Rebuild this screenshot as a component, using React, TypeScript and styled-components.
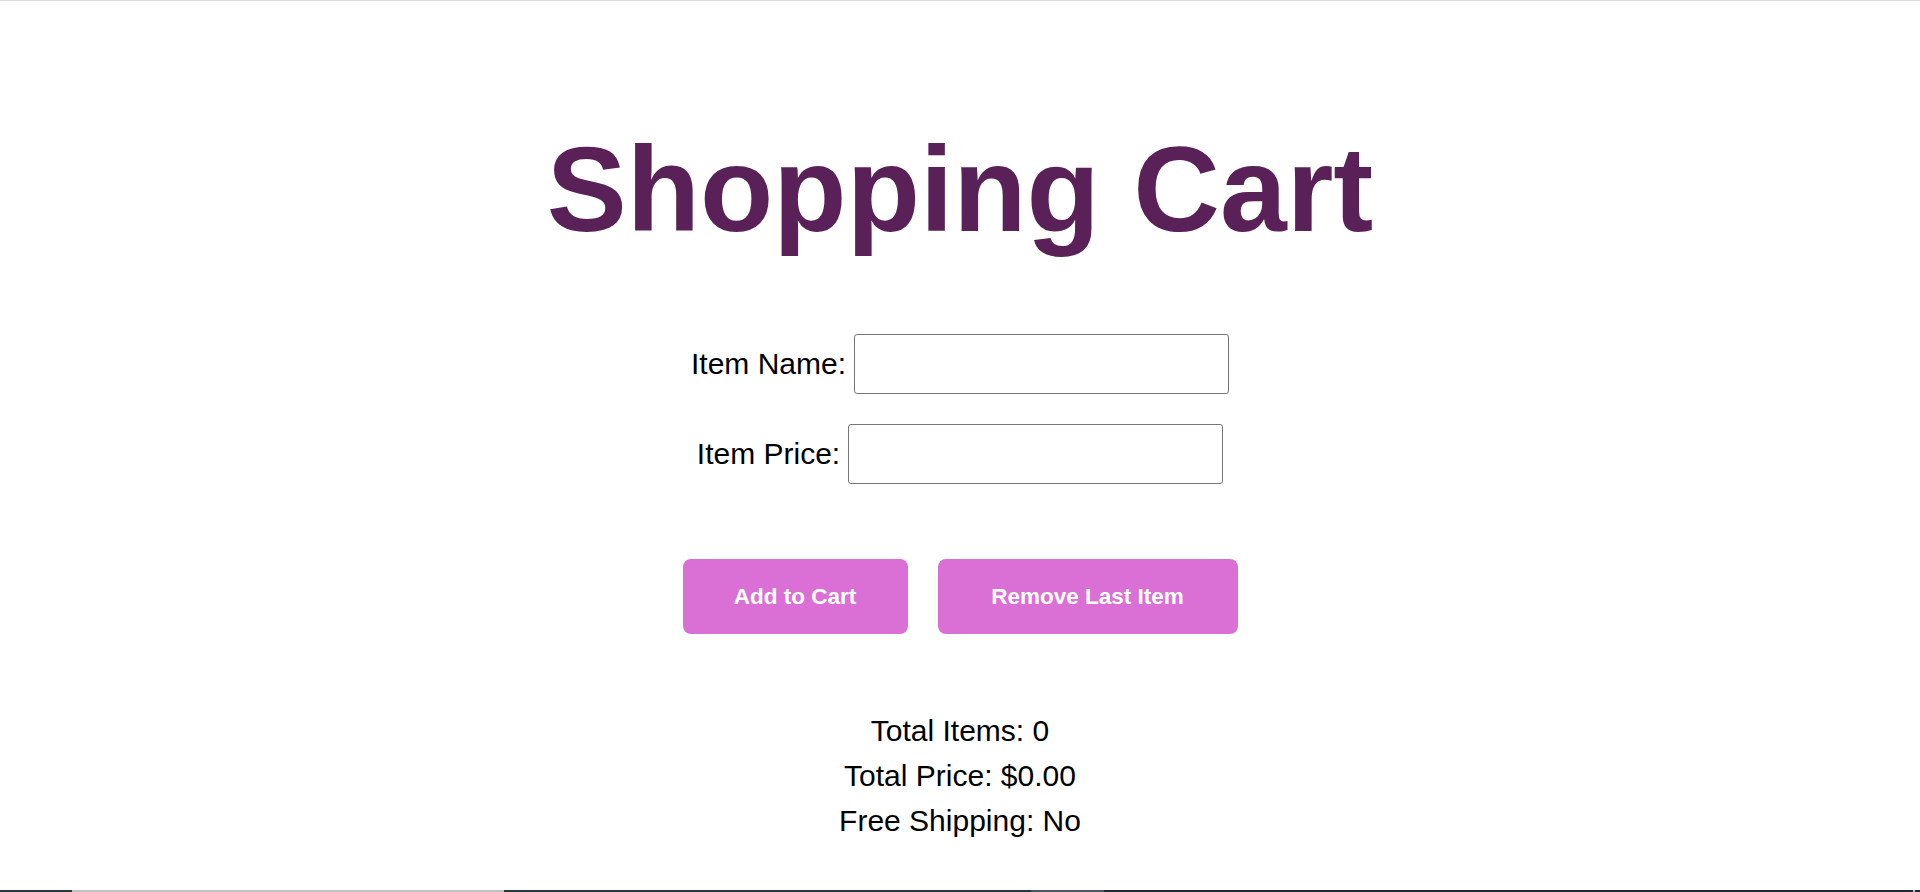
import React from "react";
import styled, { createGlobalStyle } from "styled-components";

const GlobalStyle = createGlobalStyle`
  html, body {
    margin: 0;
    padding: 0;
    background: #ffffff;
  }
  body {
    font-family: "Liberation Sans", Arial, sans-serif;
    color: #000000;
  }
  * { box-sizing: border-box; }
`;

const Page = styled.div`
  min-height: 100vh;
  display: flex;
  flex-direction: column;
  border-top: 1px solid #dcdcdc;
`;

const Main = styled.main`
  display: flex;
  flex-direction: column;
  align-items: center;
`;

const Title = styled.h1`
  margin: 119px 0 0;
  font-size: 120px;
  line-height: 138px;
  font-weight: 700;
  color: #5a2058;
`;

const Form = styled.div`
  margin-top: 76px;
  display: flex;
  flex-direction: column;
  align-items: center;
  gap: 30px;
`;

const FieldRow = styled.div`
  display: flex;
  align-items: center;
  justify-content: center;
  gap: 8px;
`;

const Label = styled.label`
  font-size: 30px;
  line-height: 34px;
  color: #000;
  white-space: nowrap;
`;

const TextInput = styled.input`
  width: 375px;
  height: 60px;
  border: 1px solid #767676;
  border-radius: 3px;
  background: #fff;
  padding: 0 10px;
  font-family: "Liberation Sans", Arial, sans-serif;
  font-size: 22px;
  outline: none;
`;

const ButtonRow = styled.div`
  margin-top: 75px;
  display: flex;
  gap: 30px;
`;

const ActionButton = styled.button<{ $w: number }>`
  width: ${(p) => p.$w}px;
  height: 75px;
  border: none;
  border-radius: 8px;
  background: #da70d6;
  color: #ffffff;
  font-family: "Liberation Sans", Arial, sans-serif;
  font-size: 22.5px;
  font-weight: 700;
  cursor: pointer;
  padding: 0;
`;

const Summary = styled.div`
  margin-top: 74px;
  display: flex;
  flex-direction: column;
  align-items: center;
`;

const SummaryLine = styled.div`
  font-size: 30px;
  line-height: 45px;
  color: #000;
  text-align: center;
`;

const BottomStrip = styled.div`
  margin-top: auto;
  height: 2px;
  display: flex;
`;

const StripSegment = styled.span<{ $w: number; $c: string }>`
  flex: 0 0 ${(p) => p.$w}px;
  background: ${(p) => p.$c};
`;

const segments = [
  { w: 72, c: "#263840" },
  { w: 432, c: "#c0c0c0" },
  { w: 527, c: "#263840" },
  { w: 73, c: "#4a5660" },
  { w: 809, c: "#1f2a38" },
  { w: 2, c: "#c0c0c0" },
  { w: 5, c: "#1f2a38" },
];

export default function App() {
  return (
    <>
      <GlobalStyle />
      <Page>
        <Main>
          <Title>Shopping Cart</Title>
          <Form>
            <FieldRow>
              <Label htmlFor="item-name">Item Name:</Label>
              <TextInput id="item-name" type="text" />
            </FieldRow>
            <FieldRow>
              <Label htmlFor="item-price">Item Price:</Label>
              <TextInput id="item-price" type="text" />
            </FieldRow>
          </Form>
          <ButtonRow>
            <ActionButton $w={225}>Add to Cart</ActionButton>
            <ActionButton $w={300}>Remove Last Item</ActionButton>
          </ButtonRow>
          <Summary>
            <SummaryLine>Total Items: 0</SummaryLine>
            <SummaryLine>Total Price: $0.00</SummaryLine>
            <SummaryLine>Free Shipping: No</SummaryLine>
          </Summary>
        </Main>
        <BottomStrip>
          {segments.map((s, i) => (
            <StripSegment key={i} $w={s.w} $c={s.c} />
          ))}
        </BottomStrip>
      </Page>
    </>
  );
}
